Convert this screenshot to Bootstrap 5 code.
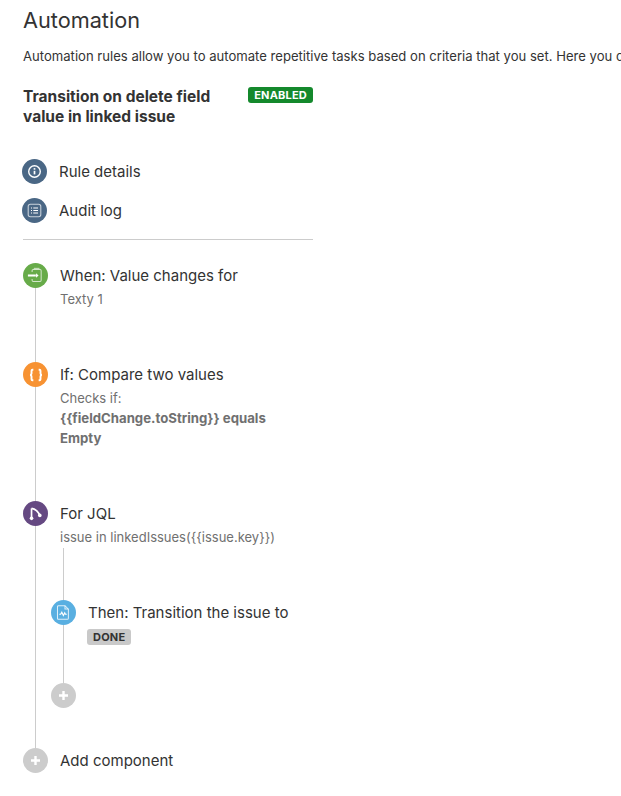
<!DOCTYPE html>
<html lang="en">
<head>
  <meta charset="UTF-8">
  <meta name="viewport" content="width=device-width, initial-scale=1">
  <title>Automation</title>
  <link href="https://cdn.jsdelivr.net/npm/bootstrap@5.3.2/dist/css/bootstrap.min.css" rel="stylesheet">
  <style>
    html, body { height: 100%; overflow: hidden; }
    body {
      font-family: Inter, "Liberation Sans", sans-serif;
      color: #333;
      background: #fff;
      padding: 7px 0 0 23px;
    }
    .page-title { font-size: 21.7px; line-height: 27px; font-weight: 400; margin: 0 0 13px; }
    .page-intro { font-size: 13.1px; line-height: 18px; margin: 0 0 22px; white-space: nowrap; }
    .side-col { width: 290px; }
    .rule-name { font-size: 15.5px; line-height: 20px; font-weight: 700; margin: 0; width: 215px; }
    .state-tag {
      font-size: 11px; line-height: 16px; font-weight: 700; height: 16px;
      padding: 0 6px; border-radius: 3px; text-transform: uppercase; letter-spacing: .2px;
    }
    .tag-on { background: #14892c; color: #fff; }
    .tag-done { background: #c9c9c9; color: #333; display: block; width: fit-content; margin-top: 4px; margin-left: -1px; }
    .dot {
      width: 25px; height: 25px; border-radius: 50%; flex: none;
      display: flex; align-items: center; justify-content: center;
    }
    .dot svg { display: block; }
    .dot-slate { background: #4a6785; margin-left: -1px; }
    .dot-green { background: #67ab49; }
    .dot-orange { background: #f79232; }
    .dot-purple { background: #654982; }
    .dot-blue { background: #59afe1; }
    .dot-grey { background: #ccc; }
    .menu-row { font-size: 15px; line-height: 25px; gap: 12px; margin-bottom: 14px; }
    .menu-top { margin-top: 32px; }
    .split { border-top: 1px solid #ccc; margin: 16px 0 23px; }
    .flow-step { display: flex; gap: 12px; }
    .rail { width: 25px; flex: none; display: flex; flex-direction: column; align-items: center; }
    .wire { width: 1px; flex-grow: 1; background: #ccc; }
    .step-title { font-size: 15px; line-height: 25px; white-space: nowrap; }
    .step-desc { font-size: 13px; line-height: 20px; color: #707070; margin-top: 1px; max-width: 215px; }
    .step-desc strong { font-size: 13.2px; }
    .step-when { height: 99px; }
    .step-if { height: 139px; }
    .step-for { height: 247px; }
    .nested { margin-left: -9px; margin-top: 1px; }
    .wire-lead { width: 1px; height: 52px; background: #ccc; margin-left: 12px; }
    .step-then { height: 83px; }
  </style>
</head>
<body>

<h1 class="page-title">Automation</h1>
<p class="page-intro">Automation rules allow you to automate repetitive tasks based on criteria that you set. Here you can create and manage your rules for this project.</p>

<div class="side-col">
  <div class="d-flex justify-content-between align-items-start">
    <h2 class="rule-name">Transition on delete field value in linked issue</h2>
    <span class="state-tag tag-on">Enabled</span>
  </div>

  <div class="d-flex align-items-center menu-row menu-top">
    <span class="dot dot-slate">
      <svg width="15" height="15" viewBox="0 0 15 15" fill="none" stroke="#fff"><circle cx="7.5" cy="7.5" r="5.8" stroke-width="1.4"/><path d="M7.5 6.8v3.6" stroke-width="1.7"/><path d="M7.5 4.1v1.6" stroke-width="1.7"/></svg>
    </span>
    <span>Rule details</span>
  </div>
  <div class="d-flex align-items-center menu-row mb-0">
    <span class="dot dot-slate">
      <svg width="15" height="15" viewBox="0 0 15 15" fill="none" stroke="#fff"><rect x="1.2" y="1.2" width="12.6" height="12.6" rx="2.2" stroke-width="1.1" stroke-opacity=".7"/><path d="M4 5h1M6.3 5H11M4 7.5h1M6.3 7.5H11M4 10h1M6.3 10H11" stroke-width="1"/></svg>
    </span>
    <span>Audit log</span>
  </div>

  <div class="split"></div>

  <div class="flow-step step-when">
    <div class="rail">
      <span class="dot dot-green">
        <svg width="17" height="17" viewBox="0 0 15 15" fill="none" stroke="#fff"><path d="M4.5 4.5V3.2q0-1 1-1h6q1 0 1 1v8.6q0 1-1 1h-6q-1 0-1-1V10.5" stroke-width=".9" stroke-opacity=".7"/><path d="M.8 7.5h7" stroke-width="1.8"/><path d="M8 5.6l2.2 1.9L8 9.4z" fill="#fff" stroke="none"/><path d="M6 1.2h5" stroke-width=".9" stroke-opacity=".7"/></svg>
      </span>
      <div class="wire"></div>
    </div>
    <div>
      <div class="step-title">When: Value changes for</div>
      <div class="step-desc">Texty 1</div>
    </div>
  </div>

  <div class="flow-step step-if">
    <div class="rail">
      <span class="dot dot-orange">
        <svg width="16" height="16" viewBox="0 0 15 15" fill="none" stroke="#fff" stroke-width="1.8"><path d="M5 2.5H4.2q-.9 0-.9 1v2.6q0 1.1-1.2 1.4 1.2.3 1.2 1.4v2.6q0 1 .9 1H5"/><path d="M10 2.5h.8q.9 0 .9 1v2.6q0 1.1 1.2 1.4-1.2.3-1.2 1.4v2.6q0 1-.9 1H10"/></svg>
      </span>
      <div class="wire"></div>
    </div>
    <div>
      <div class="step-title">If: Compare two values</div>
      <div class="step-desc">Checks if:<br><strong>{{fieldChange.toString}} equals Empty</strong></div>
    </div>
  </div>

  <div class="flow-step step-for">
    <div class="rail">
      <span class="dot dot-purple">
        <svg width="17" height="17" viewBox="0 0 15 15" fill="none" stroke="#fff" stroke-width="1.5"><circle cx="4" cy="11.8" r="1.6" fill="#fff" stroke="none"/><circle cx="11.3" cy="9.2" r="1.6" fill="#fff" stroke="none"/><path d="M4 11.5V3"/><path d="M4 3q5 .8 7.3 6.2"/></svg>
      </span>
      <div class="wire"></div>
    </div>
    <div>
      <div class="step-title">For JQL</div>
      <div class="step-desc">issue in linkedIssues({{issue.key}})</div>
      <div class="nested">
        <div class="wire-lead"></div>
        <div class="flow-step step-then">
          <div class="rail">
            <span class="dot dot-blue">
              <svg width="17" height="17" viewBox="0 0 15 15" fill="none" stroke="#fff" stroke-width=".9"><path d="M3.2 1.5h5.6l3 3v8q0 1-1 1H3.2q-1 0-1-1v-10q0-1 1-1z" stroke-opacity=".8"/><path d="M8.8 1.5v3h3" stroke-opacity=".8"/><path d="M3.8 9h1.2l1-1.8 1.4 3 1.2-2.4.6 1.2h1.2" stroke-width="1"/></svg>
            </span>
            <div class="wire"></div>
          </div>
          <div>
            <div class="step-title">Then: Transition the issue to</div>
            <span class="state-tag tag-done">Done</span>
          </div>
        </div>
        <span class="dot dot-grey">
          <svg width="13" height="13" viewBox="0 0 13 13" fill="none" stroke="#fff" stroke-width="2.4"><path d="M6.5 2v9M2 6.5h9"/></svg>
        </span>
      </div>
    </div>
  </div>

  <div class="flow-step">
    <div class="rail">
      <span class="dot dot-grey">
        <svg width="13" height="13" viewBox="0 0 13 13" fill="none" stroke="#fff" stroke-width="2.4"><path d="M6.5 2v9M2 6.5h9"/></svg>
      </span>
    </div>
    <div class="step-title">Add component</div>
  </div>
</div>

<script src="https://cdn.jsdelivr.net/npm/bootstrap@5.3.2/dist/js/bootstrap.bundle.min.js"></script>
</body>
</html>
